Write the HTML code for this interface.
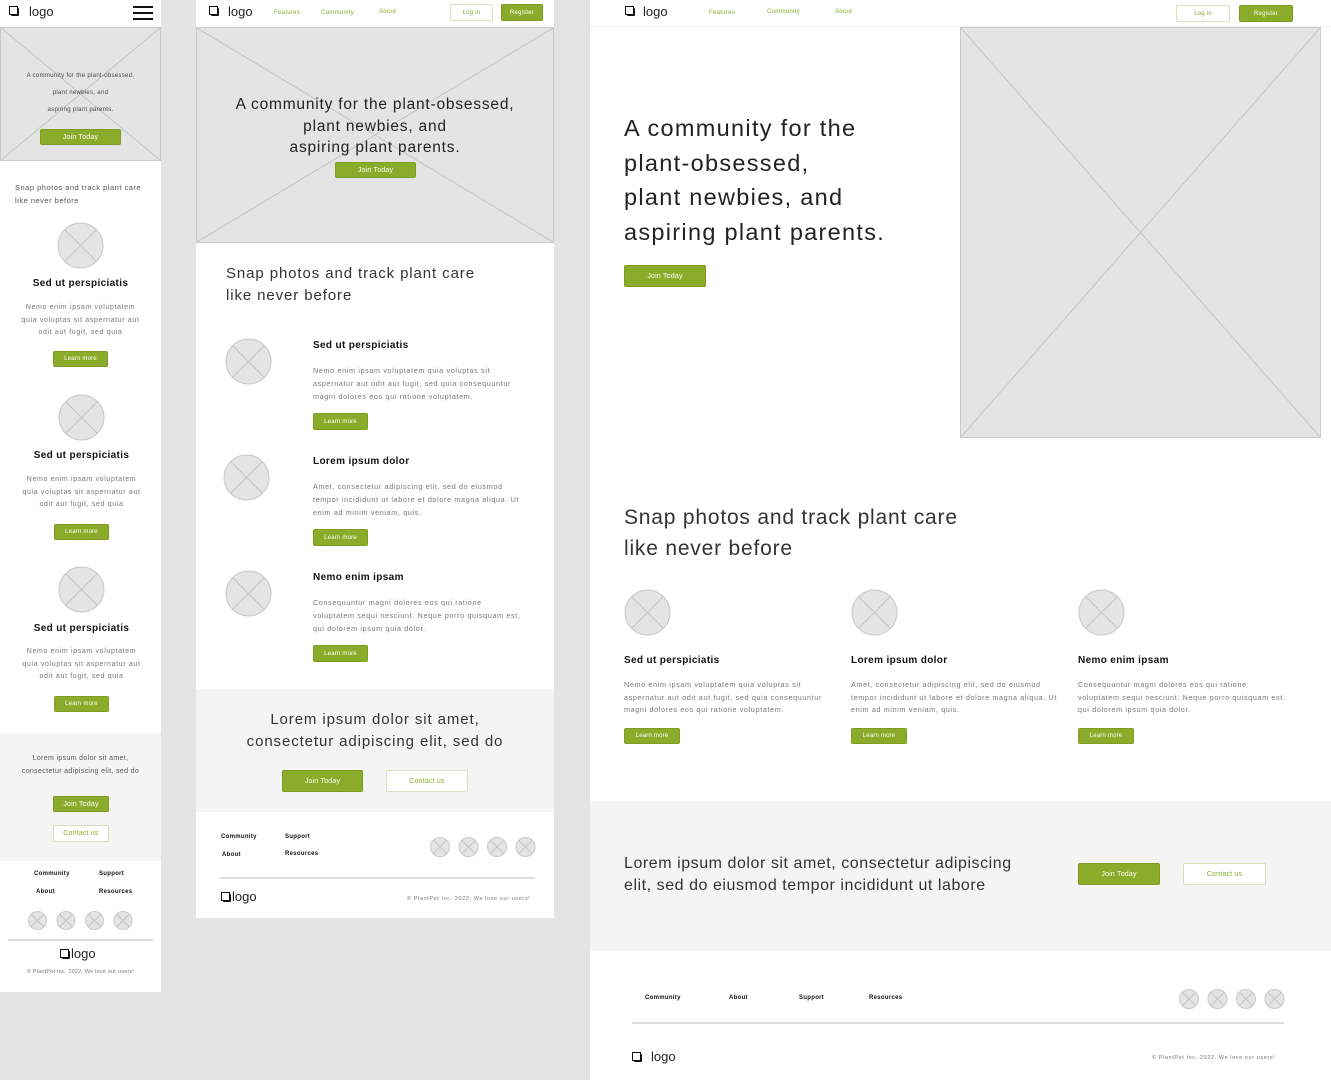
<!DOCTYPE html>
<html><head><meta charset="utf-8">
<style>
*{margin:0;padding:0;box-sizing:border-box}
body{width:1331px;height:1080px;background:#e4e4e4;position:relative;overflow:hidden;font-family:"Liberation Sans",sans-serif;color:#222}
.a{position:absolute}
.p{position:absolute;background:#fff}
.g{position:absolute;background:#f4f4f4}
.t{position:absolute;white-space:nowrap}
.ph{position:absolute;background:#e4e4e4;border:1px solid #c9c9c9}
.ph svg{position:absolute;left:0;top:0;width:100%;height:100%}
.btn{position:absolute;background:#8aac2a;border:1px solid #7d9c22;border-radius:2px;color:#fff;display:flex;align-items:center;justify-content:center;white-space:nowrap;letter-spacing:.2px}
.ob{position:absolute;background:#fff;border:1px solid #d8e0bd;border-radius:2px;color:#8aac2a;display:flex;align-items:center;justify-content:center;white-space:nowrap;letter-spacing:.2px}
.nav{color:#8aac2a;letter-spacing:.3px}
.h{font-weight:bold;color:#111;letter-spacing:.35px}
.b{color:#777;letter-spacing:.65px}
.c{text-align:center}
.li{position:absolute;width:8px;height:8px;background:#111;border-radius:1px}
.li:before{content:"";position:absolute;left:-2px;top:-2px;width:7px;height:7px;background:#fff;border:1px solid #111}
.fl{font-weight:bold;font-size:6px;color:#111;letter-spacing:.3px}
.cp{font-size:5.5px;color:#777;letter-spacing:.6px}
.ln{position:absolute;height:2px;background:#ddd}
</style></head><body>

<!-- ================= MOBILE ================= -->
<div class="p" style="left:0;top:0;width:161px;height:992px"></div>
<div class="li" style="left:11px;top:8px"></div>
<div class="t" style="left:29px;top:4px;font-size:13px">logo</div>
<div class="a" style="left:133px;top:6px;width:20px;height:2px;background:#111"></div>
<div class="a" style="left:133px;top:12px;width:20px;height:2px;background:#111"></div>
<div class="a" style="left:133px;top:18px;width:20px;height:2px;background:#111"></div>
<div class="ph" style="left:0;top:27px;width:161px;height:134px"><svg viewBox="0 0 100 100" preserveAspectRatio="none"><path d="M0 0L100 100M100 0L0 100" stroke="#c4c4c4" stroke-width="1" vector-effect="non-scaling-stroke"/></svg></div>
<div class="t c" style="left:0;width:161px;top:68px;font-size:6px;line-height:17px;color:#444;letter-spacing:.3px">A community for the plant-obsessed,<br>plant newbies, and<br>aspiring plant parents.</div>
<div class="btn" style="left:40px;top:129px;width:81px;height:16px;font-size:7px">Join Today</div>
<div class="t" style="left:15px;top:181px;font-size:7.5px;line-height:13px;color:#555;letter-spacing:.5px">Snap photos and track plant care<br>like never before</div>

<div class="a" style="left:57px;top:222px"><svg width="47" height="47"><circle cx="23.5" cy="23.5" r="22.5" fill="#e4e4e4" stroke="#c9c9c9"/><path d="M7.6 7.6L39.4 39.4M39.4 7.6L7.6 39.4" stroke="#c4c4c4"/></svg></div>
<div class="t c h" style="left:0;width:161px;top:278px;font-size:10px">Sed ut perspiciatis</div>
<div class="t c b" style="left:0;width:161px;top:302px;font-size:7px;line-height:12.5px">Nemo enim ipsam voluptatem<br>quia voluptas sit aspernatur aut<br>odit aut fugit, sed quia</div>
<div class="btn" style="left:53px;top:351px;width:55px;height:16px;font-size:6px">Learn more</div>

<div class="a" style="left:58px;top:394px"><svg width="47" height="47"><circle cx="23.5" cy="23.5" r="22.5" fill="#e4e4e4" stroke="#c9c9c9"/><path d="M7.6 7.6L39.4 39.4M39.4 7.6L7.6 39.4" stroke="#c4c4c4"/></svg></div>
<div class="t c h" style="left:1px;width:161px;top:450px;font-size:10px">Sed ut perspiciatis</div>
<div class="t c b" style="left:1px;width:161px;top:474px;font-size:7px;line-height:12.5px">Nemo enim ipsam voluptatem<br>quia voluptas sit aspernatur aut<br>odit aut fugit, sed quia</div>
<div class="btn" style="left:54px;top:524px;width:55px;height:16px;font-size:6px">Learn more</div>

<div class="a" style="left:58px;top:566px"><svg width="47" height="47"><circle cx="23.5" cy="23.5" r="22.5" fill="#e4e4e4" stroke="#c9c9c9"/><path d="M7.6 7.6L39.4 39.4M39.4 7.6L7.6 39.4" stroke="#c4c4c4"/></svg></div>
<div class="t c h" style="left:1px;width:161px;top:623px;font-size:10px">Sed ut perspiciatis</div>
<div class="t c b" style="left:1px;width:161px;top:646px;font-size:7px;line-height:12.5px">Nemo enim ipsam voluptatem<br>quia voluptas sit aspernatur aut<br>odit aut fugit, sed quia</div>
<div class="btn" style="left:54px;top:696px;width:55px;height:16px;font-size:6px">Learn more</div>

<div class="g" style="left:0;top:733px;width:161px;height:128px"></div>
<div class="t c b" style="left:0;width:161px;top:752px;font-size:7px;line-height:13px;color:#555;letter-spacing:.35px">Lorem ipsum dolor sit amet,<br>consectetur adipiscing elit, sed do</div>
<div class="btn" style="left:53px;top:796px;width:56px;height:16px;font-size:7px">Join Today</div>
<div class="ob" style="left:53px;top:825px;width:56px;height:17px;font-size:7px">Contact us</div>

<div class="t fl" style="left:34px;top:871px">Community</div>
<div class="t fl" style="left:99px;top:871px">Support</div>
<div class="t fl" style="left:36px;top:889px">About</div>
<div class="t fl" style="left:99px;top:889px">Resources</div>
<div class="a" style="left:28px;top:911px"><svg width="130" height="20"><g fill="#e4e4e4" stroke="#c9c9c9"><circle cx="9.5" cy="9.5" r="9"/><circle cx="38" cy="9.5" r="9"/><circle cx="66.5" cy="9.5" r="9"/><circle cx="95" cy="9.5" r="9"/></g><path d="M3.1 3.1L15.9 15.9M15.9 3.1L3.1 15.9M31.6 3.1L44.4 15.9M44.4 3.1L31.6 15.9M60.1 3.1L72.9 15.9M72.9 3.1L60.1 15.9M88.6 3.1L101.4 15.9M101.4 3.1L88.6 15.9" stroke="#c4c4c4"/></svg></div>
<div class="ln" style="left:8px;top:939px;width:145px"></div>
<div class="li" style="left:62px;top:951px"></div>
<div class="t" style="left:71px;top:946px;font-size:13px">logo</div>
<div class="t c cp" style="left:0;width:161px;top:969px;letter-spacing:.2px">© PlantPet Inc. 2022. We love our users!</div>

<!-- ================= TABLET ================= -->
<div class="p" style="left:196px;top:0;width:358px;height:918px"></div>
<div class="li" style="left:211px;top:8px"></div>
<div class="t" style="left:228px;top:4px;font-size:13px">logo</div>
<div class="t nav" style="left:274px;top:10px;font-size:6px">Features</div>
<div class="t nav" style="left:321px;top:10px;font-size:6px">Community</div>
<div class="t nav" style="left:379px;top:9px;font-size:6px">About</div>
<div class="ob" style="left:450px;top:4px;width:43px;height:17px;font-size:6px">Log in</div>
<div class="btn" style="left:501px;top:4px;width:42px;height:17px;font-size:6px">Register</div>
<div class="ph" style="left:196px;top:27px;width:358px;height:216px"><svg viewBox="0 0 100 100" preserveAspectRatio="none"><path d="M0 0L100 100M100 0L0 100" stroke="#c4c4c4" stroke-width="1" vector-effect="non-scaling-stroke"/></svg></div>
<div class="t c" style="left:196px;width:358px;top:94px;font-size:15.5px;line-height:21.5px;color:#222;letter-spacing:.8px">A community for the plant-obsessed,<br>plant newbies, and<br>aspiring plant parents.</div>
<div class="btn" style="left:335px;top:162px;width:81px;height:16px;font-size:7px">Join Today</div>
<div class="t" style="left:226px;top:263px;font-size:15px;line-height:22px;color:#333;letter-spacing:.9px">Snap photos and track plant care<br>like never before</div>

<div class="a" style="left:225px;top:338px"><svg width="47" height="47"><circle cx="23.5" cy="23.5" r="22.5" fill="#e4e4e4" stroke="#c9c9c9"/><path d="M7.6 7.6L39.4 39.4M39.4 7.6L7.6 39.4" stroke="#c4c4c4"/></svg></div>
<div class="t h" style="left:313px;top:340px;font-size:10px">Sed ut perspiciatis</div>
<div class="t b" style="left:313px;top:364px;font-size:7.2px;line-height:13px">Nemo enim ipsam voluptatem quia voluptas sit<br>aspernatur aut odit aut fugit, sed quia consequuntur<br>magni dolores eos qui ratione voluptatem.</div>
<div class="btn" style="left:313px;top:413px;width:55px;height:17px;font-size:6px">Learn more</div>

<div class="a" style="left:223px;top:454px"><svg width="47" height="47"><circle cx="23.5" cy="23.5" r="22.5" fill="#e4e4e4" stroke="#c9c9c9"/><path d="M7.6 7.6L39.4 39.4M39.4 7.6L7.6 39.4" stroke="#c4c4c4"/></svg></div>
<div class="t h" style="left:313px;top:456px;font-size:10px">Lorem ipsum dolor</div>
<div class="t b" style="left:313px;top:480px;font-size:7.2px;line-height:13px">Amet, consectetur adipiscing elit, sed do eiusmod<br>tempor incididunt ut labore et dolore magna aliqua. Ut<br>enim ad minim veniam, quis.</div>
<div class="btn" style="left:313px;top:529px;width:55px;height:17px;font-size:6px">Learn more</div>

<div class="a" style="left:225px;top:570px"><svg width="47" height="47"><circle cx="23.5" cy="23.5" r="22.5" fill="#e4e4e4" stroke="#c9c9c9"/><path d="M7.6 7.6L39.4 39.4M39.4 7.6L7.6 39.4" stroke="#c4c4c4"/></svg></div>
<div class="t h" style="left:313px;top:572px;font-size:10px">Nemo enim ipsam</div>
<div class="t b" style="left:313px;top:596px;font-size:7.2px;line-height:13px">Consequuntur magni dolores eos qui ratione<br>voluptatem sequi nesciunt. Neque porro quisquam est,<br>qui dolorem ipsum quia dolor.</div>
<div class="btn" style="left:313px;top:645px;width:55px;height:17px;font-size:6px">Learn more</div>

<div class="g" style="left:196px;top:689px;width:358px;height:123px"></div>
<div class="t c" style="left:196px;width:358px;top:709px;font-size:15px;line-height:22px;color:#333;letter-spacing:.9px">Lorem ipsum dolor sit amet,<br>consectetur adipiscing elit, sed do</div>
<div class="btn" style="left:282px;top:770px;width:81px;height:22px;font-size:7px">Join Today</div>
<div class="ob" style="left:386px;top:770px;width:82px;height:22px;font-size:7px">Contact us</div>

<div class="t fl" style="left:221px;top:834px">Community</div>
<div class="t fl" style="left:285px;top:834px">Support</div>
<div class="t fl" style="left:222px;top:852px">About</div>
<div class="t fl" style="left:285px;top:851px">Resources</div>
<div class="a" style="left:430px;top:837px"><svg width="110" height="21"><g fill="#e4e4e4" stroke="#c9c9c9"><circle cx="10" cy="10" r="9.5"/><circle cx="38.5" cy="10" r="9.5"/><circle cx="67" cy="10" r="9.5"/><circle cx="95.5" cy="10" r="9.5"/></g><path d="M3.3 3.3L16.7 16.7M16.7 3.3L3.3 16.7M31.8 3.3L45.2 16.7M45.2 3.3L31.8 16.7M60.3 3.3L73.7 16.7M73.7 3.3L60.3 16.7M88.8 3.3L102.2 16.7M102.2 3.3L88.8 16.7" stroke="#c4c4c4"/></svg></div>
<div class="ln" style="left:220px;top:877px;width:315px"></div>
<div class="li" style="left:223px;top:894px"></div>
<div class="t" style="left:232px;top:889px;font-size:13px">logo</div>
<div class="t cp" style="left:407px;top:896px">© PlantPet Inc. 2022. We love our users!</div>

<!-- ================= DESKTOP ================= -->
<div class="p" style="left:590px;top:0;width:741px;height:1080px"></div>
<div class="a" style="left:590px;top:26px;width:741px;height:1px;background:#f0f0f0"></div>
<div class="li" style="left:627px;top:8px"></div>
<div class="t" style="left:643px;top:4px;font-size:13px">logo</div>
<div class="t nav" style="left:709px;top:10px;font-size:6px">Features</div>
<div class="t nav" style="left:767px;top:9px;font-size:6px">Community</div>
<div class="t nav" style="left:835px;top:9px;font-size:6px">About</div>
<div class="ob" style="left:1176px;top:5px;width:54px;height:17px;font-size:6px">Log in</div>
<div class="btn" style="left:1239px;top:5px;width:54px;height:17px;font-size:6px">Register</div>
<div class="ph" style="left:960px;top:27px;width:361px;height:411px"><svg viewBox="0 0 100 100" preserveAspectRatio="none"><path d="M0 0L100 100M100 0L0 100" stroke="#c4c4c4" stroke-width="1" vector-effect="non-scaling-stroke"/></svg></div>
<div class="t" style="left:624px;top:111px;font-size:23.5px;line-height:34.5px;color:#222;letter-spacing:1.3px">A community for the<br>plant-obsessed,<br>plant newbies, and<br>aspiring plant parents.</div>
<div class="btn" style="left:624px;top:265px;width:82px;height:22px;font-size:7px">Join Today</div>
<div class="t" style="left:624px;top:502px;font-size:21px;line-height:31px;color:#333;letter-spacing:.8px">Snap photos and track plant care<br>like never before</div>

<div class="a" style="left:624px;top:589px"><svg width="47" height="47"><circle cx="23.5" cy="23.5" r="22.5" fill="#e4e4e4" stroke="#c9c9c9"/><path d="M7.6 7.6L39.4 39.4M39.4 7.6L7.6 39.4" stroke="#c4c4c4"/></svg></div>
<div class="t h" style="left:624px;top:655px;font-size:10px">Sed ut perspiciatis</div>
<div class="t b" style="left:624px;top:679px;font-size:7.2px;line-height:12.7px">Nemo enim ipsam voluptatem quia voluptas sit<br>aspernatur aut odit aut fugit, sed quia consequuntur<br>magni dolores eos qui ratione voluptatem.</div>
<div class="btn" style="left:624px;top:728px;width:56px;height:16px;font-size:6px">Learn more</div>

<div class="a" style="left:851px;top:589px"><svg width="47" height="47"><circle cx="23.5" cy="23.5" r="22.5" fill="#e4e4e4" stroke="#c9c9c9"/><path d="M7.6 7.6L39.4 39.4M39.4 7.6L7.6 39.4" stroke="#c4c4c4"/></svg></div>
<div class="t h" style="left:851px;top:655px;font-size:10px">Lorem ipsum dolor</div>
<div class="t b" style="left:851px;top:679px;font-size:7.2px;line-height:12.7px">Amet, consectetur adipiscing elit, sed do eiusmod<br>tempor incididunt ut labore et dolore magna aliqua. Ut<br>enim ad minim veniam, quis.</div>
<div class="btn" style="left:851px;top:728px;width:56px;height:16px;font-size:6px">Learn more</div>

<div class="a" style="left:1078px;top:589px"><svg width="47" height="47"><circle cx="23.5" cy="23.5" r="22.5" fill="#e4e4e4" stroke="#c9c9c9"/><path d="M7.6 7.6L39.4 39.4M39.4 7.6L7.6 39.4" stroke="#c4c4c4"/></svg></div>
<div class="t h" style="left:1078px;top:655px;font-size:10px">Nemo enim ipsam</div>
<div class="t b" style="left:1078px;top:679px;font-size:7.2px;line-height:12.7px">Consequuntur magni dolores eos qui ratione<br>voluptatem sequi nesciunt. Neque porro quisquam est,<br>qui dolorem ipsum quia dolor.</div>
<div class="btn" style="left:1078px;top:728px;width:56px;height:16px;font-size:6px">Learn more</div>

<div class="g" style="left:590px;top:801px;width:741px;height:150px"></div>
<div class="t" style="left:624px;top:853px;font-size:16px;line-height:21.5px;color:#333;letter-spacing:.55px">Lorem ipsum dolor sit amet, consectetur adipiscing<br>elit, sed do eiusmod tempor incididunt ut labore</div>
<div class="btn" style="left:1078px;top:863px;width:82px;height:22px;font-size:7px">Join Today</div>
<div class="ob" style="left:1183px;top:863px;width:83px;height:22px;font-size:7px">Contact us</div>

<div class="t fl" style="left:645px;top:995px">Community</div>
<div class="t fl" style="left:729px;top:995px">About</div>
<div class="t fl" style="left:799px;top:995px">Support</div>
<div class="t fl" style="left:869px;top:995px">Resources</div>
<div class="a" style="left:1179px;top:989px"><svg width="110" height="21"><g fill="#e4e4e4" stroke="#c9c9c9"><circle cx="10" cy="10" r="9.5"/><circle cx="38.5" cy="10" r="9.5"/><circle cx="67" cy="10" r="9.5"/><circle cx="95.5" cy="10" r="9.5"/></g><path d="M3.3 3.3L16.7 16.7M16.7 3.3L3.3 16.7M31.8 3.3L45.2 16.7M45.2 3.3L31.8 16.7M60.3 3.3L73.7 16.7M73.7 3.3L60.3 16.7M88.8 3.3L102.2 16.7M102.2 3.3L88.8 16.7" stroke="#c4c4c4"/></svg></div>
<div class="ln" style="left:632px;top:1022px;width:652px"></div>
<div class="li" style="left:634px;top:1054px"></div>
<div class="t" style="left:651px;top:1049px;font-size:13px">logo</div>
<div class="t cp" style="left:1152px;top:1055px">© PlantPet Inc. 2022. We love our users!</div>

</body></html>
